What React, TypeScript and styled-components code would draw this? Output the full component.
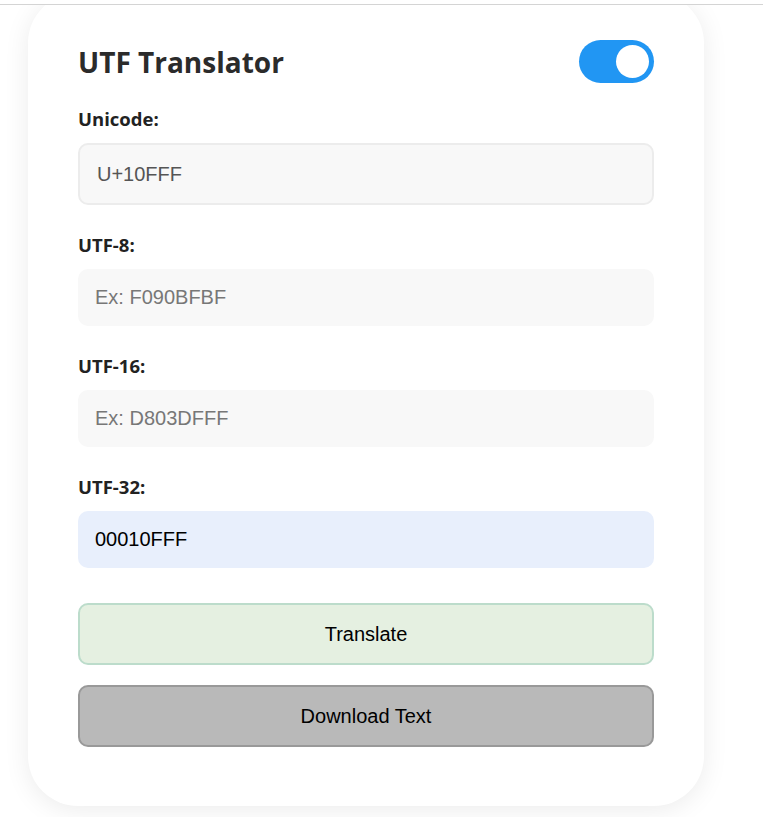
import React from "react";
import styled, { createGlobalStyle } from "styled-components";

const GlobalStyle = createGlobalStyle`
  html, body {
    margin: 0;
    padding: 0;
    background: #ffffff;
    overflow: hidden;
  }
`;

const TopRule = styled.div`
  position: relative;
  z-index: 2;
  height: 4px;
  background: #ffffff;
  border-bottom: 1px solid #d4d4d4;
`;

const Viewport = styled.div`
  height: 812px;
  overflow: hidden;
  padding-left: 28px;
`;

const Card = styled.div`
  box-sizing: border-box;
  width: 676px;
  margin-top: -12px;
  padding: 47px 50px 59px;
  background: #ffffff;
  border-radius: 50px;
  box-shadow: 0 4px 26px rgba(0, 0, 0, 0.08);
  font-family: "Open Sans", "Noto Sans", sans-serif;
`;

const Header = styled.div`
  display: flex;
  align-items: center;
  justify-content: space-between;
  height: 43px;
  margin-bottom: 25px;
`;

const Title = styled.h1`
  margin: 0;
  font-size: 28px;
  font-weight: 700;
  color: #2b2b2b;
`;

const Switch = styled.button<{ $on: boolean }>`
  width: 75px;
  height: 43px;
  padding: 5px;
  border: none;
  border-radius: 22px;
  background: ${(p) => (p.$on ? "#2196f3" : "#cccccc")};
  display: flex;
  justify-content: ${(p) => (p.$on ? "flex-end" : "flex-start")};
  align-items: center;
  cursor: pointer;
`;

const Knob = styled.span`
  width: 33px;
  height: 33px;
  border-radius: 50%;
  background: #ffffff;
`;

const Field = styled.div`
  margin-bottom: 29px;
  &:last-of-type {
    margin-bottom: 35px;
  }
`;

const Label = styled.label`
  display: block;
  font-size: 18.5px;
  line-height: 22px;
  font-weight: 700;
  color: #222;
  margin-bottom: 13px;
`;

const Input = styled.input<{ $tone: "plain" | "bordered" | "filled" }>`
  box-sizing: border-box;
  display: block;
  width: 100%;
  height: ${(p) => (p.$tone === "bordered" ? "62px" : "57px")};
  padding: 0 17px;
  border: ${(p) => (p.$tone === "bordered" ? "2px solid #ececec" : "none")};
  border-radius: 10px;
  background: ${(p) => (p.$tone === "filled" ? "#e8effc" : "#f8f8f8")};
  font-family: "Liberation Sans", Arial, sans-serif;
  font-size: 20px;
  color: ${(p) => (p.$tone === "bordered" ? "#555555" : "#000000")};
  outline: none;
  &::placeholder {
    color: #777777;
  }
`;

const Button = styled.button<{ $variant: "go" | "save" }>`
  box-sizing: border-box;
  display: block;
  width: 100%;
  height: 62px;
  border-radius: 10px;
  border: 2px solid ${(p) => (p.$variant === "go" ? "#bcdccb" : "#999999")};
  background: ${(p) => (p.$variant === "go" ? "#e5f0e1" : "#b9b9b9")};
  font-family: "Liberation Sans", Arial, sans-serif;
  font-size: 20px;
  color: #000;
  cursor: pointer;
  & + & {
    margin-top: 20px;
  }
`;

const fields = [
  { label: "Unicode:", value: "U+10FFF", placeholder: "", tone: "bordered" as const },
  { label: "UTF-8:", value: "", placeholder: "Ex: F090BFBF", tone: "plain" as const },
  { label: "UTF-16:", value: "", placeholder: "Ex: D803DFFF", tone: "plain" as const },
  { label: "UTF-32:", value: "00010FFF", placeholder: "", tone: "filled" as const },
];

const App = () => {
  const [on, setOn] = React.useState(true);
  return (
    <>
      <GlobalStyle />
      <TopRule />
      <Viewport>
        <Card>
          <Header>
            <Title>UTF Translator</Title>
            <Switch $on={on} onClick={() => setOn(!on)} aria-label="toggle">
              <Knob />
            </Switch>
          </Header>
          {fields.map((f) => (
            <Field key={f.label}>
              <Label>{f.label}</Label>
              <Input
                $tone={f.tone}
                defaultValue={f.value}
                placeholder={f.placeholder}
              />
            </Field>
          ))}
          <Button $variant="go">Translate</Button>
          <Button $variant="save">Download Text</Button>
        </Card>
      </Viewport>
    </>
  );
};

export default App;
